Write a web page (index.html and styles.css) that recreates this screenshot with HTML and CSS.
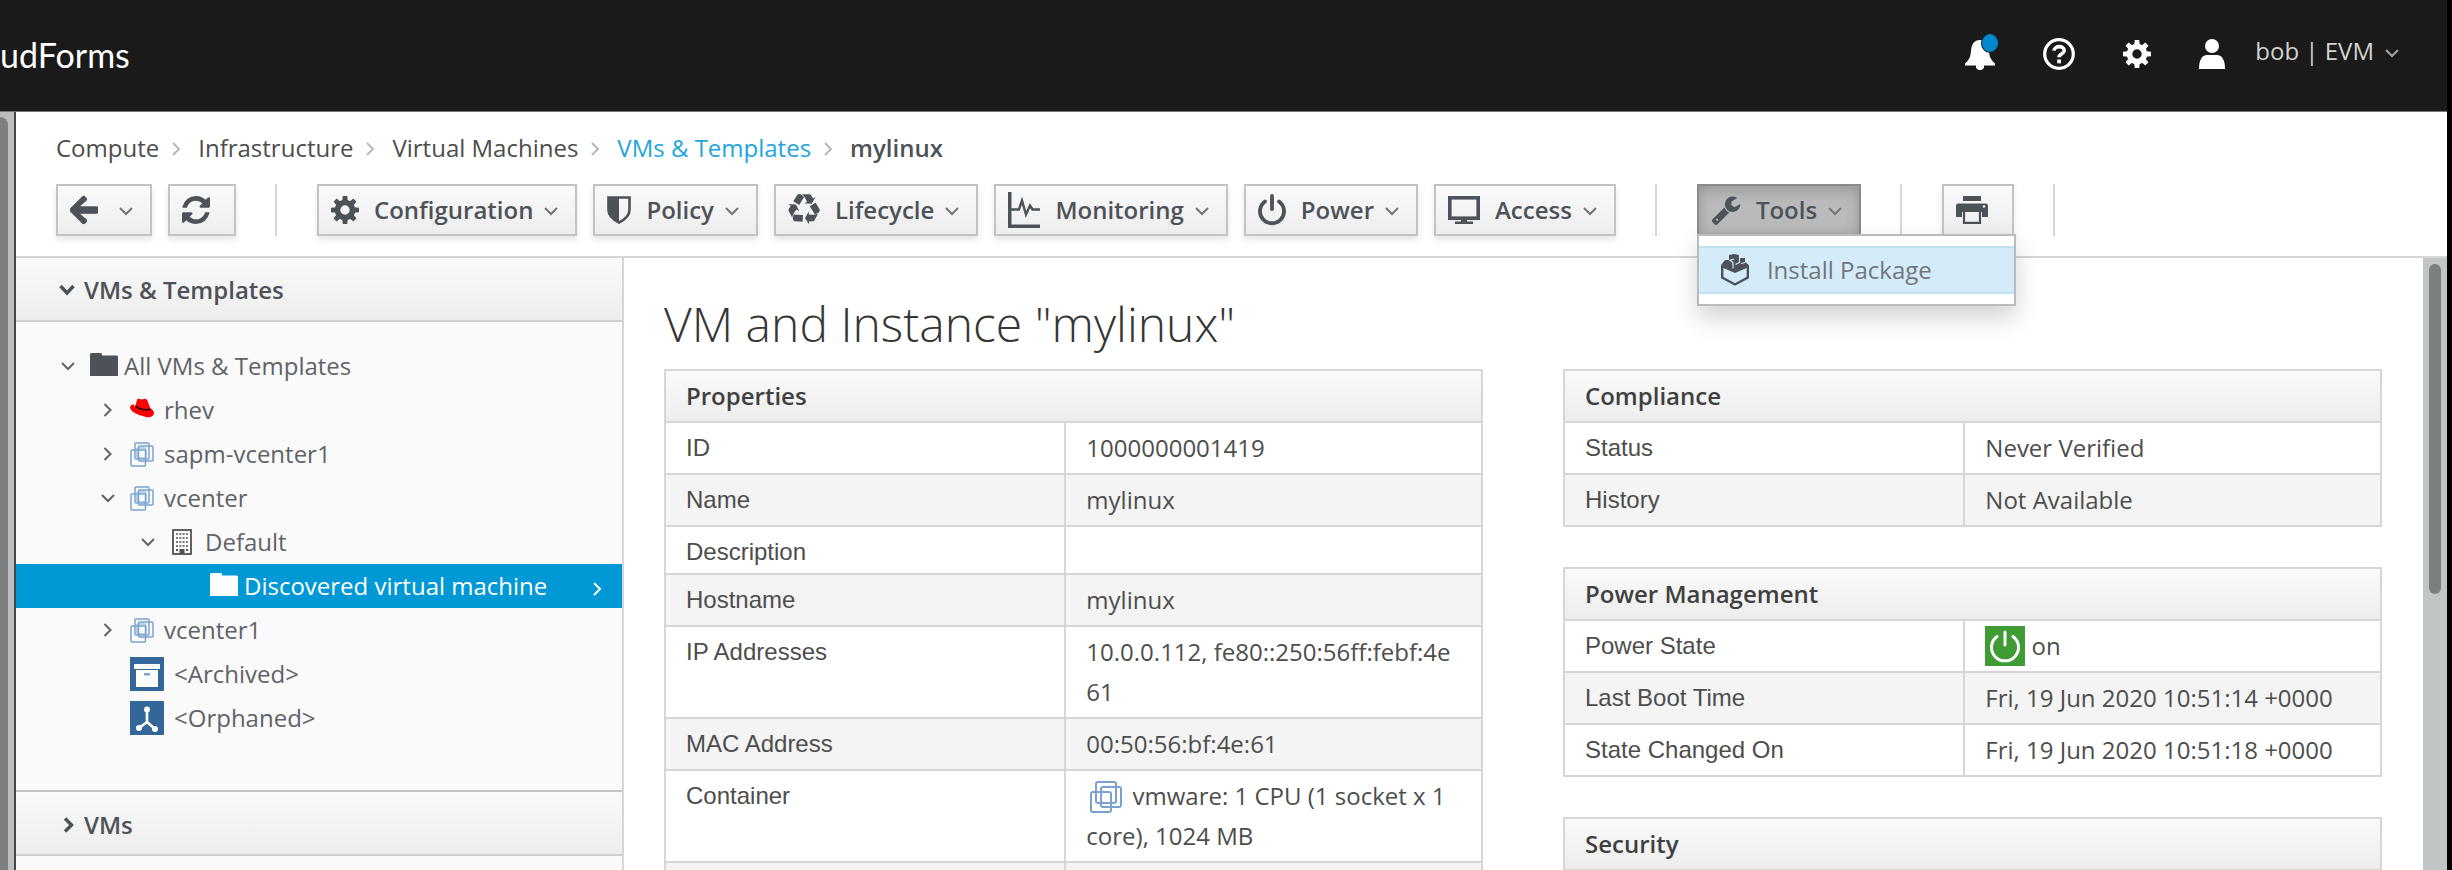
FILE: index.html
```html
<!DOCTYPE html>
<html lang="en">
<head>
<meta charset="utf-8">
<title>CloudForms - VM and Instance "mylinux"</title>
<link rel="stylesheet" href="styles.css">
</head>
<body>
<svg class="sprite" aria-hidden="true">
  <symbol id="down" viewBox="0 0 14 9"><path d="M1 1l6 6 6-6" fill="none" stroke="currentColor" stroke-width="2"/></symbol>
  <symbol id="right" viewBox="0 0 9 14"><path d="M1 1l6 6-6 6" fill="none" stroke="currentColor" stroke-width="2"/></symbol>
  <symbol id="cog" viewBox="0 0 28 28">
    <circle cx="14" cy="14" r="7.5" fill="none" stroke="currentColor" stroke-width="5.6"/>
    <g fill="currentColor">
      <path d="M11.800 0h4.400l.6 5h-5.600zM11.800 28h4.400l.6-5h-5.600zM0 11.800v4.400l5 .6v-5.600zM28 11.800v4.400l-5 .6v-5.600z"/>
      <path d="M11.800 0h4.400l.6 5h-5.600zM11.800 28h4.400l.6-5h-5.600zM0 11.800v4.400l5 .6v-5.600zM28 11.800v4.400l-5 .6v-5.600z" transform="rotate(45 14 14)"/>
    </g>
  </symbol>
  <symbol id="folder" viewBox="0 0 28 23"><path d="M0 1.500Q0 0 1.500 0h9q1.500 0 1.500 1.500v1h14.500q1.500 0 1.500 1.500v19H0z" fill="currentColor"/></symbol>
  <symbol id="vmware" viewBox="0 0 24 25">
    <g fill="none" stroke="#7ba2ce" stroke-width="1.500">
      <rect x="5" y="1" width="14" height="16" rx="1"/><rect x="8.500" y="4" width="14.500" height="15" rx="1"/><rect x="1" y="8" width="14.500" height="16" rx="1"/>
      <rect x="7" y="6" width="9" height="10" rx="1" stroke-width="1"/>
    </g>
  </symbol>
</svg>
<div class="page">
  <header class="masthead">
    <a class="brand" href="#" aria-label="CloudForms">udForms</a>
    <nav class="tools" aria-label="Utilities">
      <button class="icon-button bell" aria-label="Notifications">
        <svg width="30" height="32" viewBox="0 0 30 32"><path d="M15 2c6 0 8.500 4.500 9 11 .4 6 2 9 6 12.500v2H0v-2C4 22 5.600 19 6 13c.5-6.500 3-11 9-11zM11 27.500h8v2.500l-2.500 2h-3L11 30z" fill="#fff"/></svg>
        <span class="dot"></span>
      </button>
      <button class="icon-button" aria-label="Help">
        <svg width="32" height="32" viewBox="0 0 32 32"><g fill="none" stroke="#fff"><circle cx="16" cy="16" r="14.300" stroke-width="3.200"/><path d="M11 12.700c.4-5.400 10.400-5.400 10.200 0-.2 3.400-5.200 3.100-5.200 6.600" stroke-width="3.600"/></g><rect x="14.200" y="21.500" width="3.800" height="3.800" fill="#fff"/></svg>
      </button>
      <button class="icon-button" aria-label="Settings"><svg width="28" height="28"><use href="#cog"/></svg></button>
      <button class="user">
        <svg width="26" height="30" viewBox="0 0 26 30"><circle cx="13" cy="7" r="7" fill="#fff"/><path d="M0 30c0-9 3-14 8-14h10c5 0 8 5 8 14z" fill="#fff"/></svg>
        <span>bob | EVM</span>
        <svg class="chev" width="14" height="9"><use href="#down"/></svg>
      </button>
    </nav>
  </header>

  <div class="shell">
    <div class="left-track"><div class="left-thumb"></div></div>
    <div class="main">
      <div class="topbar">
        <nav aria-label="Breadcrumb">
          <ol class="crumbs">
            <li>Compute</li>
            <li><svg width="9" height="14"><use href="#right"/></svg>Infrastructure</li>
            <li><svg width="9" height="14"><use href="#right"/></svg>Virtual Machines</li>
            <li><svg width="9" height="14"><use href="#right"/></svg><a href="#">VMs &amp; Templates</a></li>
            <li class="current"><svg width="9" height="14"><use href="#right"/></svg>mylinux</li>
          </ol>
        </nav>
        <div class="toolbar" role="toolbar">
          <div class="group">
            <button class="btn" aria-label="Back">
              <svg width="28" height="32" viewBox="0 0 448 512"><path fill="currentColor" d="M257.500 445.100l-22.200 22.200c-9.400 9.400-24.600 9.400-33.900 0L7 273c-9.400-9.400-9.400-24.600 0-33.900L201.400 44.700c9.400-9.400 24.600-9.400 33.900 0l22.200 22.200c9.500 9.500 9.300 25-.4 34.300L136.600 206H424c13.300 0 24 10.700 24 24v52c0 13.300-10.700 24-24 24H136.600l120.500 104.800c9.800 9.300 10 24.800.4 34.300z" stroke="currentColor" stroke-width="18"/></svg>
              <svg class="chev wide" width="14" height="9"><use href="#down"/></svg>
            </button>
            <button class="btn square" aria-label="Refresh">
              <svg width="28" height="28" viewBox="128 128 1536 1536"><path fill="currentColor" d="M1639 1056q0 5-1 7-64 268-268 434.500t-478 166.500q-146 0-282.500-55t-243.500-157l-129 129q-19 19-45 19t-45-19-19-45v-448q0-26 19-45t45-19h448q26 0 45 19t19 45-19 45l-137 137q71 66 161 102t187 36q134 0 250-65t186-179q11-17 53-117 8-23 30-23h192q13 0 22.500 9.500t9.500 22.500zm25-800v448q0 26-19 45t-45 19h-448q-26 0-45-19t-19-45 19-45l138-138q-148-137-349-137-134 0-250 65t-186 179q-11 17-53 117-8 23-30 23h-199q-13 0-22.500-9.500t-9.500-22.500v-7q65-268 270-434.500t480-166.500q146 0 284 55.500t245 156.500l130-129q19-19 45-19t45 19 19 45z"/></svg>
            </button>
          </div>
          <div class="group">
            <button class="btn"><svg width="28" height="28"><use href="#cog"/></svg><span>Configuration</span><svg class="chev" width="14" height="9"><use href="#down"/></svg></button>
            <button class="btn">
              <svg width="24" height="28" viewBox="0 0 24 28"><path d="M1.500 1.500h21V14c0 6-4.500 9.500-10.500 12.500C6 23.500 1.500 20 1.500 14z" fill="none" stroke="currentColor" stroke-width="2.600"/><path d="M1 1h11v25C5 22.500 1 19 1 14z" fill="currentColor"/></svg>
              <span>Policy</span><svg class="chev" width="14" height="9"><use href="#down"/></svg></button>
            <button class="btn">
              <svg width="32" height="32" viewBox="0 0 1792 1792"><path fill="currentColor" d="M836 1169l-15 368-2 22-420-29q-36-3-67-31.500t-47-65.500q-11-27-14.500-55t4-65 12-55 21.500-64 19-53q78 12 509 28zm-387-586l180 379-147-92q-63 72-111.500 144.500t-72.500 125-39.500 94.500-18.500 63l-4 21-190-357q-17-26-18-56t6-47l8-18q35-63 114-188l-140-86zm1231 517l-188 359q-12 29-36.500 46.500t-43.500 20.500l-18 4q-71 7-219 12l8 164-230-367 211-362 7 173q170 16 283 5t170-33zm-785-924q-47 63-265 435l-317-187-19-12 225-356q20-31 60-45t80-10q24 2 48.500 12t42 21 41.500 33 36 34.500 36 39.500 32 35zm655 307l212 363q18 37 12.500 76t-27.500 74q-13 20-33 37t-38 28-48.500 22-47 16-51.500 14-46 12q-34-72-265-436l313-195zm-143-226l142-83-220 373-419-20 151-86q-34-89-75-166t-75.500-123.500-64.500-80-47-46.500l-17-13 405 1q31-3 58 10.500t39 28.500l11 15q39 61 112 190z"/></svg>
              <span>Lifecycle</span><svg class="chev" width="14" height="9"><use href="#down"/></svg></button>
            <button class="btn">
              <svg width="32" height="36" viewBox="0 0 32 36" fill="none" stroke="currentColor"><path d="M1.700 0v34.300H32" stroke-width="3.600"/><path d="M3 17.500h8l3-9 4 14 4-9 2.500 4H32" stroke-width="2.400"/></svg>
              <span>Monitoring</span><svg class="chev" width="14" height="9"><use href="#down"/></svg></button>
            <button class="btn">
              <svg width="28" height="32" viewBox="0 0 28 32" fill="none" stroke="currentColor" stroke-width="3.800" stroke-linecap="round"><path d="M14 2v13M7 7.500a12 12 0 1 0 14 0"/></svg>
              <span>Power</span><svg class="chev" width="14" height="9"><use href="#down"/></svg></button>
            <button class="btn">
              <svg width="32" height="28" viewBox="0 0 32 28"><rect x="1.800" y="1.800" width="28.400" height="20.400" fill="none" stroke="currentColor" stroke-width="3.600"/><path d="M13 23h6v2.500h6V28H7v-2.500h6z" fill="currentColor"/></svg>
              <span>Access</span><svg class="chev" width="14" height="9"><use href="#down"/></svg></button>
          </div>
          <div class="group">
            <div class="dropdown">
              <button class="btn active" aria-expanded="true">
                <svg width="30" height="30" viewBox="60 40 1680 1740"><path fill="currentColor" d="M448 1472q0-26-19-45t-45-19-45 19-19 45 19 45 45 19 45-19 19-45zm644-420l-682 682q-37 37-90 37-52 0-91-37l-106-108q-38-36-38-90 0-53 38-91l681-681q39 98 114.500 173.500t173.500 114.500zm634-435q0 39-23 106-47 134-164.500 217.500t-258.500 83.500q-185 0-316.500-131.500t-131.500-316.500 131.500-316.500 316.500-131.500q58 0 121.500 16.500t107.500 46.500q16 11 16 28t-16 28l-293 169v224l193 107q5-3 79-48.500t135.500-81 70.500-35.500q15 0 23.500 10t8.500 25z"/></svg>
                <span>Tools</span><svg class="chev" width="14" height="9"><use href="#down"/></svg></button>
              <ul class="menu">
                <li><a href="#">
                  <svg width="28" height="32" viewBox="0 0 28 32"><path d="M1.200 12v11.500L14 30.500l12.800-7V12" fill="none" stroke="currentColor" stroke-width="2.400"/><path d="M0 11l4-5h4V1l5-1 5 1v5h1V4h5v4l4 3v2l-14 6L0 13z" fill="currentColor"/><path d="M13 5l-4 1.500 3 2v6M18.500 1v7.500l-4 2M24 8.500l-4 1" fill="none" stroke="#d4ecf9" stroke-width="1.200"/></svg>
                  Install Package</a></li>
              </ul>
            </div>
          </div>
          <div class="group">
            <button class="btn square" aria-label="Print">
              <svg width="32" height="28" viewBox="0 0 32 28" fill="currentColor"><path d="M7 0h18v5H7zM2.500 7.500h27Q32 7.500 32 10v11h-6v-5H6v5H0V10q0-2.500 2.500-2.500z"/><path d="M8 16v10.800h16V16" fill="none" stroke="currentColor" stroke-width="2.200"/><circle cx="28" cy="10.500" r="1.200" fill="#f5f5f5"/></svg>
            </button>
          </div>
          <div class="group"></div>
        </div>
      </div>

      <div class="columns">
        <aside class="sidebar">
          <button class="accordion"><svg width="16" height="12" viewBox="0 0 16 12"><path d="M1.500 2L8 9l6.500-7" fill="none" stroke="currentColor" stroke-width="3.400"/></svg>VMs &amp; Templates</button>
          <ul class="tree">
            <li class="l1"><svg class="tw" width="14" height="9"><use href="#down"/></svg><svg class="folder" width="28" height="23"><use href="#folder"/></svg>All VMs &amp; Templates</li>
            <li class="l2"><svg class="tw" width="9" height="14"><use href="#right"/></svg><svg class="ic hat" width="24" height="20" viewBox="0 0 24 20"><path d="M5 9.500L7 1.800Q7.500.5 9 .8l3 .8 3-.8q1.500 0 2.300 1.500l3 8Q24 12 24 15.500 23 20 16 19 2 16 0 10q0-4 4-3.500z" fill="#f00"/><path d="M5 8.800q4 4.500 15 3.500l.5-1.700Q11 12 5.600 7.200z" fill="#200"/></svg>rhev</li>
            <li class="l2"><svg class="tw" width="9" height="14"><use href="#right"/></svg><svg class="ic" width="24" height="25"><use href="#vmware"/></svg>sapm-vcenter1</li>
            <li class="l2"><svg class="tw" width="14" height="9"><use href="#down"/></svg><svg class="ic" width="24" height="25"><use href="#vmware"/></svg>vcenter</li>
            <li class="l3"><svg class="tw" width="14" height="9"><use href="#down"/></svg><svg class="ic building" width="20" height="26" viewBox="0 0 20 26"><rect x="1" y="1" width="18" height="24" fill="none" stroke="currentColor" stroke-width="1.800"/><path d="M4 5h12M4 9h12M4 13h12M4 17h12" stroke="currentColor" stroke-width="1.500" stroke-dasharray="2 1.300"/><path d="M7.500 20h5v5h-5zM4 20h2v2H4zM14 20h2v2h-2z" fill="currentColor"/></svg>Default</li>
            <li class="l4 selected"><svg class="folder" width="28" height="23"><use href="#folder"/></svg>Discovered virtual machine<svg class="go" width="9" height="14"><use href="#right"/></svg></li>
            <li class="l2"><svg class="tw" width="9" height="14"><use href="#right"/></svg><svg class="ic" width="24" height="25"><use href="#vmware"/></svg>vcenter1</li>
            <li class="l2 leaf"><svg class="ic" width="34" height="34" viewBox="0 0 34 34"><path fill="#336699" d="M0 0h34v34H0z"/><path fill="#fff" d="M4 7h26v5H4zM6 12h22v18H6z"/><path d="M5 12.500h24" stroke="#336699" stroke-width="1"/><path fill="#85a3c2" d="M14 16h6v2.500h-6z"/></svg>&lt;Archived&gt;</li>
            <li class="l2 leaf"><svg class="ic" width="34" height="34" viewBox="0 0 34 34"><path fill="#336699" d="M0 0h34v34H0z"/><path d="M17 8v13l-8 6M17 21l8 7" fill="none" stroke="#fff" stroke-width="2.600"/><g fill="#fff"><circle cx="17" cy="8.500" r="3"/><circle cx="9" cy="27" r="3"/><circle cx="25" cy="28" r="3"/></g></svg>&lt;Orphaned&gt;</li>
          </ul>
          <button class="accordion second"><svg width="16" height="16" viewBox="0 0 16 16"><path d="M6 1.500L12.500 8 6 14.500" fill="none" stroke="currentColor" stroke-width="3.400"/></svg>VMs</button>
        </aside>

        <main class="content">
          <h1>VM and Instance "mylinux"</h1>
          <div class="grid">
            <section>
              <table>
                <colgroup><col class="label-col"><col></colgroup>
                <thead><tr><th colspan="2">Properties</th></tr></thead>
                <tbody>
                  <tr><th scope="row">ID</th><td>1000000001419</td></tr>
                  <tr><th scope="row">Name</th><td>mylinux</td></tr>
                  <tr><th scope="row">Description</th><td></td></tr>
                  <tr><th scope="row">Hostname</th><td>mylinux</td></tr>
                  <tr><th scope="row">IP Addresses</th><td class="address">10.0.0.112, fe80::250:56ff:febf:4e61</td></tr>
                  <tr><th scope="row">MAC Address</th><td>00:50:56:bf:4e:61</td></tr>
                  <tr><th scope="row">Container</th><td><svg class="vendor" width="40" height="40" viewBox="0 -5 40 40"><g fill="none" stroke="#7ba2ce" stroke-width="2"><rect x="10" y="1" width="20" height="21" rx="2"/><rect x="15" y="6" width="20" height="20" rx="2"/><rect x="5" y="11" width="20" height="20" rx="2"/></g></svg> vmware: 1 CPU (1 socket x 1 core), 1024 MB</td></tr>
                  <tr><th scope="row">&nbsp;</th><td></td></tr>
                </tbody>
              </table>
            </section>
            <section>
              <table>
                <colgroup><col class="label-col"><col></colgroup>
                <thead><tr><th colspan="2">Compliance</th></tr></thead>
                <tbody>
                  <tr><th scope="row">Status</th><td>Never Verified</td></tr>
                  <tr><th scope="row">History</th><td>Not Available</td></tr>
                </tbody>
              </table>
              <table>
                <colgroup><col class="label-col"><col></colgroup>
                <thead><tr><th colspan="2">Power Management</th></tr></thead>
                <tbody>
                  <tr><th scope="row">Power State</th><td><svg class="state" width="40" height="40" viewBox="0 0 40 40"><path fill="#3f9c35" d="M0 0h40v40H0z"/><path d="M20 6v13M12 10.500a13.500 13.500 0 1 0 16 0" fill="none" stroke="#fff" stroke-width="3" stroke-linecap="round"/></svg> on</td></tr>
                  <tr><th scope="row">Last Boot Time</th><td>Fri, 19 Jun 2020 10:51:14 +0000</td></tr>
                  <tr><th scope="row">State Changed On</th><td>Fri, 19 Jun 2020 10:51:18 +0000</td></tr>
                </tbody>
              </table>
              <table>
                <thead><tr><th colspan="2">Security</th></tr></thead>
              </table>
            </section>
          </div>
        </main>
        <div class="right-track"><div class="right-thumb"></div></div>
      </div>
    </div>
  </div>
</div>
</body>
</html>
```
FILE: styles.css
```css
* { box-sizing: border-box; }

body {
  margin: 0;
  background: #000;
  font-family: "Open Sans", sans-serif;
  font-size: 24px;
  line-height: 40px;
  color: #4d4d4d;
}

ul, ol { list-style: none; margin: 0; padding: 0; }
button { font: inherit; color: inherit; border: 0; background: none; padding: 0; }
a { color: inherit; text-decoration: none; }
svg { flex: none; }
.sprite { position: absolute; width: 0; height: 0; }

.page {
  display: flex;
  flex-direction: column;
  height: 100vh;
  overflow: hidden;
  margin-right: 5px;
  background: #fff;
}

/* Masthead */
.masthead {
  display: flex;
  justify-content: space-between;
  flex: none;
  height: 112px;
  background: #1a1a1a;
  border-bottom: 1px solid #777;
}
.brand {
  padding-top: 35px;
  font-family: Lato, sans-serif;
  font-size: 34px;
  color: #fff;
}
.tools {
  display: flex;
  align-items: center;
  gap: 48px;
  padding: 0 48px 4px 0;
  color: #fff;
}
.icon-button { display: flex; position: relative; }
.dot {
  position: absolute;
  top: -5px;
  right: -4px;
  width: 18px;
  height: 20px;
  border-radius: 50%;
  background: #0088ce;
  border: 1px solid #1a1a1a;
}
.user { display: flex; align-items: center; color: #d1d1d1; }
.user span { margin: 0 11px 6px 30px; }
.user .chev { margin-top: 0; color: #a5a5a5; }

/* Shell */
.shell { display: flex; flex: 1; min-height: 0; }
.left-track {
  flex: none;
  width: 16px;
  padding-top: 5px;
  background: #bcbebe;
  border-right: 2px solid #44474a;
}
.left-thumb { width: 8px; height: 100%; border-radius: 0 8px 0 0; background: #7b7f7f; }
.main { display: flex; flex-direction: column; flex: 1; min-width: 0; }

.topbar {
  display: flex;
  flex-direction: column;
  gap: 16px;
  padding: 16px 40px 20px;
  border-bottom: 2px solid #d6d6d6;
}
.crumbs { display: flex; }
.crumbs li { display: flex; align-items: center; }
.crumbs svg { margin: 2px 17px 0 13px; color: #b8b8b8; }
.crumbs a { color: #22a5dd; }
.crumbs .current { font-weight: 600; color: #4d5258; }

.toolbar { display: flex; }
.group { display: flex; gap: 16px; height: 52px; }
.group + .group { margin-left: 39px; padding-left: 40px; border-left: 2px solid #d6d6d6; }
.btn {
  display: flex;
  align-items: center;
  height: 52px;
  padding: 0 17px 0 12px;
  border: 2px solid #c3c3c3;
  background: linear-gradient(#fafafa, #ededed);
  box-shadow: 0 4px 6px rgba(3, 3, 3, 0.1);
  color: #4d5258;
  font-weight: 600;
}
.btn span { margin: 0 11px 0 15px; }
.btn.square { padding-right: 24px; }
.chev { color: #72767b; margin-top: 2px; }
.chev.wide { margin-left: 21px; }
.btn.active {
  border-color: #8b8b8b;
  background: #bababa;
  box-shadow: inset 0 4px 14px rgba(3, 3, 3, 0.2);
}

.dropdown { position: relative; }
.menu {
  position: absolute;
  z-index: 2;
  top: 50px;
  left: 0;
  width: max-content;
  padding: 10px 0;
  border: 2px solid #bbb;
  background: #fff;
  box-shadow: 0 12px 24px rgba(3, 3, 3, 0.18);
}
.menu a {
  display: flex;
  align-items: center;
  gap: 18px;
  height: 48px;
  padding: 0 82px 0 22px;
  border: solid #bee1f4;
  border-width: 2px 0;
  background: #d4ecf9;
  color: #72767b;
}
.menu svg { color: #4d5258; }

/* Columns */
.columns { display: flex; flex: 1; min-height: 0; }
.sidebar {
  flex: none;
  width: 608px;
  border-right: 2px solid #d6d6d6;
  background: #fafafa;
  color: #5f6368;
  overflow: hidden;
}
.accordion {
  display: flex;
  align-items: center;
  gap: 9px;
  width: 100%;
  height: 64px;
  padding: 2px 0 0 43px;
  border-bottom: 2px solid #d0d0d0;
  background: linear-gradient(#fafafa, #ededed);
  color: #4d5258;
  font-weight: 600;
}
.accordion.second { height: 66px; padding-top: 4px; border-top: 2px solid #c4c4c4; }
.tree { padding: 22px 0 50px; }
.tree li { display: flex; align-items: center; height: 44px; }
.tree .tw { width: 14px; margin-right: 15px; }
.tree .ic { margin-right: 10px; color: #4d5258; }
.tree .hat { margin-bottom: 4px; }
.tree .building { margin-right: 13px; }
.tree .folder { margin: 0 6px 4px 0; color: #4d5258; }
.l1 { padding-left: 45px; }
.l2 { padding-left: 85px; }
.l3 { padding-left: 125px; }
.l3 .tw { margin-right: 17px; }
.l4 { padding-left: 194px; }
.l2.leaf { padding-left: 114px; }
.selected { background: #0099d6; color: #fff; }
.tree .selected svg { color: #fff; }
.selected .go { margin: 6px 20px 0 auto; }

.content { flex: 1; min-width: 0; padding: 36px 41px 0 40px; overflow: hidden; }
h1 {
  margin: 0 0 15px;
  font-size: 48px;
  line-height: 60px;
  font-weight: 300;
  color: #363636;
}
.grid { display: grid; grid-template-columns: 1fr 1fr; gap: 80px; }
table {
  width: 100%;
  table-layout: fixed;
  border-collapse: collapse;
  margin-bottom: 40px;
}
.label-col { width: 49%; }
th, td {
  padding: 5px 20px;
  border: 2px solid #d6d6d6;
  text-align: left;
  vertical-align: top;
}
thead th { font-weight: 600; background: linear-gradient(#fafafa, #ededed); color: #404040; }
tbody th {
  padding: 8px 20px 4px;
  font-family: "Liberation Sans", Arial, sans-serif;
  font-weight: 400;
  line-height: 34px;
}
tbody tr:nth-child(even) { background: #f4f4f4; }
.address { word-break: break-all; }
.vendor, .state { vertical-align: top; }

.right-track { flex: none; width: 24px; padding: 6px 6px 0; background: #c2c5c5; }
.right-thumb { height: 330px; border-radius: 6px; background: #7b7f7f; }
```
